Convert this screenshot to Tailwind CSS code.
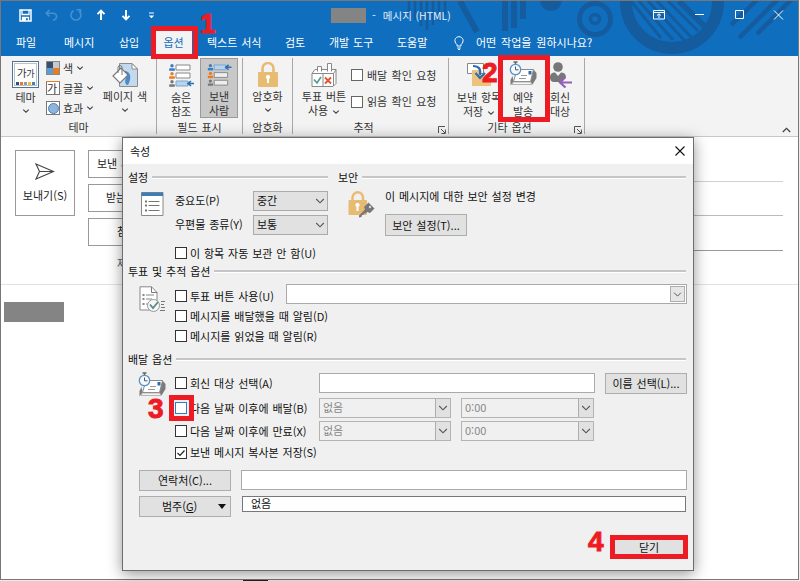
<!DOCTYPE html>
<html lang="ko">
  <head>
    <meta charset="UTF-8" />
    <meta name="viewport" content="width=device-width, initial-scale=1.0" />
    <title>메시지 (HTML)</title>
    <script src="https://cdn.jsdelivr.net/npm/@tailwindcss/browser@4"></script>
  </head>
  <body class="relative w-[800px] h-[581px] overflow-hidden bg-[#ececec] font-['Noto_Sans_CJK_KR',sans-serif] text-[11px] leading-[13px] [word-spacing:0.8px] text-[#222] whitespace-nowrap">
    <!-- shared icons -->
    <svg class="hidden">
      <symbol id="chevron" viewBox="0 0 8 8">
        <path d="M1.2 2.6 4 5.2 6.8 2.6" fill="none" stroke="#444" stroke-width="1.1" />
      </symbol>
      <symbol id="combo-arrow" viewBox="0 0 10 10">
        <path d="M1.2 3 5 6.8 8.8 3" fill="none" stroke="#555" stroke-width="1.1" />
      </symbol>
      <symbol id="launcher" viewBox="0 0 8 8">
        <path d="M.5 7V.5H7M3 3l4 4M7.4 3.5v4h-4" fill="none" stroke="#555" stroke-width="1" />
      </symbol>
      <symbol id="delay-mail" viewBox="0 0 28 26">
        <path d="M3.500 15 1.500 19V24.500L4.500 20.500Z" fill="#7b7b7b" />
        <path d="M24.500 8.500 27.500 12V17L23.500 23.500 21.500 20.500Z" fill="#7b7b7b" />
        <path d="M8 8.500H24.500L21.500 20.500H4.500Z" fill="#fff" stroke="#8a8a8a" />
        <path d="M4.500 21H21.500L23 23.500H3Z" fill="#f5f5f5" stroke="#999" stroke-width=".7" />
        <path d="M12 14.500h6M10 17.500h7" stroke="#999" />
        <rect x="19.500" y="10" width="3" height="3.500" fill="#2b6cb5" />
        <circle cx="6.500" cy="8.500" r="5.200" fill="#f6fafd" stroke="#5a92c6" stroke-width="1.300" />
        <path d="M6.500 5.500v3.300H9.500" fill="none" stroke="#555" />
        <path d="M4.500 1h4M6.500 1v2" stroke="#666" stroke-width="1.500" />
      </symbol>
      <symbol id="person-row" viewBox="0 0 24 7">
        <circle cx="3" cy="1.800" r="1.700" fill="currentColor" />
        <path d="M.2 6.800V4.300H5.800V6.800Z" fill="currentColor" />
      </symbol>
    </svg>

    <div class="w-[799px] h-[580px] border border-[#777] bg-white flex flex-col">
      <!-- title bar and tabs -->
      <div class="relative h-[55px] shrink-0 bg-[#106ebe] text-white">
        <svg class="absolute inset-0" width="797" height="55" fill="none" stroke="#155c9f">
          <path d="M408 0v14M414 0v19M420 0v25M426 0v29M432 0v24M438 0v20M444 0v14" stroke-width="2.500" />
          <path d="M459 0 476 31M504 0v30M513 0v27M522 0v18" stroke-width="6" />
          <circle cx="550" cy="-1" r="11" fill="#155c9f" stroke="none" />
          <circle cx="594" cy="18" r="15.500" stroke-width="5" />
          <circle cx="594" cy="18" r="4.500" stroke-width="3.500" />
          <circle cx="671" cy="1" r="46" stroke-width="12" />
          <path d="M630 0 660 37M638 0 672 39M647 0 684 40M656 0 690 36M667 0 697 30" stroke-width="3" />
          <path d="M678 0 706 28" stroke-width="6" />
          <path d="M738 37 776 -1M756 33 790 -1M730 24 756 -1" stroke-width="4.500" />
        </svg>
        <div class="relative h-[28px] flex items-center">
          <svg class="ml-[18px]" width="13" height="13" viewBox="0 0 13 13"><path d="M1 1h11v11H1z" fill="none" stroke="#fff" stroke-width="1.500" /><path d="M3 1v4.500h7V1M3.500 12V8.500h6V12" fill="none" stroke="#fff" stroke-width="1.300" /><path d="M4 9h3v3H4z" fill="#fff" /></svg>
          <svg class="ml-[13px]" width="13" height="12" viewBox="0 0 13 12" fill="none" stroke="#4590d0" stroke-width="1.600"><path d="M4.500 1 1.200 4.200 4.500 7.400M1.500 4.200H8C13 4.200 12.500 10.500 8 11" /></svg>
          <svg class="ml-[12px]" width="12" height="12" viewBox="0 0 12 12" fill="none" stroke="#4590d0" stroke-width="1.600"><path d="M3.500 1.700a5 5 0 1 0 5.500.4M6.500.8H11M10.500 1v4.500" /></svg>
          <svg class="ml-[14px]" width="10" height="12" viewBox="0 0 10 12" fill="none" stroke="#fff" stroke-width="1.900"><path d="M5 11V1.500M1.500 5.200 5 1.700 8.500 5.200" /></svg>
          <svg class="ml-[15px]" width="10" height="12" viewBox="0 0 10 12" fill="none" stroke="#fff" stroke-width="1.900"><path d="M5 1v9.500M1.500 6.800 5 10.300 8.500 6.800" /></svg>
          <svg class="ml-[17px]" width="7" height="7" viewBox="0 0 7 7"><path d="M1 1h5" stroke="#fff" /><path d="M.8 3.500h5.400L3.500 6.200z" fill="#fff" /></svg>
          <div class="ml-[176px] w-[35px] h-[15px] bg-[#848484]"></div>
          <div class="ml-[6px] text-[#e4effa]">-</div>
          <div class="ml-[7px] mt-[1px] text-[10.5px] text-[#e4effa]">메시지 (HTML)</div>
          <svg class="ml-auto mr-[14px]" width="131" height="12" viewBox="0 0 131 12" fill="none" stroke="#fff" stroke-width="1"><path d="M.5 1.500h11v8.500H.5zM.5 3.500h11M6 9V5M4 6.500l2-1.700 2 1.700M42 5.500h9M82.500 1.500h8v8h-8zM130 1.500l-9 9M121 1.500l9 9" /></svg>
        </div>
        <div class="relative h-[27px] flex items-center">
          <div class="ml-[15px] w-[48px]">파일</div>
          <div class="w-[55px]">메시지</div>
          <div class="w-[36px]">삽입</div>
          <div class="w-[37px] h-[27px] flex items-center justify-center bg-[#f3f3f3] text-[#106ebe]">옵션</div>
          <div class="ml-[15px] w-[78px]">텍스트 서식</div>
          <div class="w-[44px]">검토</div>
          <div class="w-[68px]">개발 도구</div>
          <div class="w-[57px]">도움말</div>
          <svg width="10" height="14" viewBox="0 0 10 14" fill="none" stroke="#fff"><path d="M3 10V8.500C-.8 5.500 1 .7 5 .7s5.800 4.800 2 7.800V10zM3.200 12h3.600M4 13.500h2" /></svg>
          <div class="ml-[12px] [word-spacing:1.800px]">어떤 작업을 원하시나요?</div>
        </div>
      </div>

      <!-- ribbon -->
      <div class="relative h-[81px] shrink-0 bg-[#f3f3f3] border-b border-[#c8c8c8] flex pt-[2px] text-[#333]">
        <div class="w-[156px] h-[76px] border-r border-[#a8a8a8] flex flex-col">
          <div class="h-[65px] flex">
            <div class="ml-[10px] w-[29px] pt-[3px] flex flex-col items-center">
              <div class="w-[27px] h-[27px] border border-[#55708c] bg-white p-px">
                <div class="w-full h-full border border-[#b5c2d0] flex flex-col items-center justify-between pb-[2px]">
                  <div class="text-[10.5px] leading-[17px] text-[#333] tracking-tighter">가<span class="text-[9px]">가</span></div>
                  <div class="flex gap-px"><i class="size-[3px] bg-[#35506e]"></i><i class="size-[3px] bg-[#e97c1f]"></i><i class="size-[3px] bg-[#999]"></i><i class="size-[3px] bg-[#f3b93a]"></i><i class="size-[3px] bg-[#3a83c9]"></i></div>
                </div>
              </div>
              <div class="mt-[3px]">테마</div>
              <svg class="size-2 mt-[3px]"><use href="#chevron" /></svg>
            </div>
            <div class="ml-[6px] w-[55px] flex flex-col">
              <div class="h-[20px] flex items-center">
                <div class="size-[14px] grid grid-cols-2 border border-[#888]"><i class="bg-[#35506e]"></i><i class="bg-[#c9c9c9]"></i><i class="bg-[#5d9bd5]"></i><i class="bg-[#e97c1f]"></i></div>
                <span class="ml-[3px] mr-[3px]">색</span><svg class="size-2"><use href="#chevron" /></svg>
              </div>
              <div class="h-[20px] flex items-center">
                <div class="size-[14px] border border-[#777] bg-white flex items-center text-[11px] leading-[12px] border-t-[#e97c1f]">가</div>
                <span class="ml-[3px] mr-[3px]">글꼴</span><svg class="size-2"><use href="#chevron" /></svg>
              </div>
              <div class="h-[20px] flex items-center">
                <div class="size-[14px] border border-[#777] bg-white flex items-center justify-center"><i class="size-[11px] rounded-full bg-[#8fb4dd] border border-[#4c7fb8]"></i></div>
                <span class="ml-[3px] mr-[3px]">효과</span><svg class="size-2"><use href="#chevron" /></svg>
              </div>
            </div>
            <div class="w-[48px] pt-[4px] flex flex-col items-center">
              <svg width="28" height="26" viewBox="0 0 28 26"><path d="M8.500 1.500H21L26.500 7V24.500H8.500z" fill="#c2d9ee" stroke="#8c8c8c" /><path d="M21 1.500V7h5.500z" fill="#fff" stroke="#8c8c8c" /><path d="M12 9c8-1 9 7 5 14-3 0-4-5-1-9" fill="#4a8ac6" /><path d="M2 14 10 6l7 7-8 8z" fill="#fff" stroke="#777" stroke-width="1.100" /><path d="M7 11V5.500a2 2 0 0 1 4 0V13" fill="none" stroke="#777" /></svg>
              <div class="mt-[2px]">페이지 색</div>
              <svg class="size-2 mt-[3px]"><use href="#chevron" /></svg>
            </div>
          </div>
          <div class="text-center">테마</div>
        </div>

        <div class="w-[86px] h-[76px] border-r border-[#a8a8a8] flex flex-col">
          <div class="h-[65px] flex pt-px">
            <div class="ml-[5px] w-[38px] pt-[5px] flex flex-col items-center">
              <svg width="25" height="24" viewBox="0 0 25 24">
                <use href="#person-row" x="0" y="0" width="24" height="7" class="text-[#3a7cc0]" />
                <use href="#person-row" x="0" y="8" width="24" height="7" class="text-[#e97c1f]" />
                <use href="#person-row" x="0" y="16" width="24" height="7" class="text-[#777]" />
                <path d="M7 1h14v5H7zM7 9h14v5H7z" fill="#fff" stroke="#888" /><path d="M7 17h12v5H7z" fill="#b7d4ee" stroke="#7da5c9" /><path d="M25 19.500h-5M22 17l-3 2.500 3 2.500" fill="none" stroke="#2b6cb5" stroke-width="1.600" />
              </svg>
              <div class="mt-[2px] leading-[14px] text-center">숨은<br />참조</div>
            </div>
            <div class="-mt-px w-[38px] h-[60px] border border-[#9a9a9a] bg-[#c8c8c8] pt-[5px] flex flex-col items-center">
              <svg width="25" height="24" viewBox="0 0 25 24">
                <use href="#person-row" x="0" y="0" width="24" height="7" class="text-[#3a7cc0]" />
                <use href="#person-row" x="0" y="8" width="24" height="7" class="text-[#e97c1f]" />
                <use href="#person-row" x="0" y="16" width="24" height="7" class="text-[#777]" />
                <path d="M7 9h14v5H7zM7 17h14v5H7z" fill="#eee" stroke="#888" /><path d="M7 1h12v5H7z" fill="#b7d4ee" stroke="#7da5c9" /><path d="M25 3.500h-5M22 1l-3 2.500 3 2.500" fill="none" stroke="#2b6cb5" stroke-width="1.600" />
              </svg>
              <div class="mt-[2px] leading-[14px] text-center">보낸<br />사람</div>
            </div>
          </div>
          <div class="text-center">필드 표시</div>
        </div>

        <div class="w-[50px] h-[76px] border-r border-[#a8a8a8] flex flex-col items-center">
          <div class="h-[65px] pt-[4px] flex flex-col items-center">
            <svg width="20" height="26" viewBox="0 0 20 26"><path d="M4.500 11V6.500a5.500 5.500 0 0 1 11 0V11" fill="none" stroke="#e8bb72" stroke-width="2.600" /><rect x="0" y="10" width="20" height="15" rx="1" fill="#e8bb72" /><path d="M10 13a2 2 0 0 1 1 3.800V21H9v-4.200A2 2 0 0 1 10 13" fill="#fff" /></svg>
            <div class="mt-[2px]">암호화</div>
            <svg class="size-2 mt-[3px]"><use href="#chevron" /></svg>
          </div>
          <div>암호화</div>
        </div>

        <div class="relative w-[156px] h-[76px] border-r border-[#a8a8a8] flex flex-col">
          <div class="h-[65px] flex">
            <div class="ml-[6px] w-[50px] pt-[4px] flex flex-col items-center">
              <svg width="26" height="26" viewBox="0 0 26 26" fill="#fff" stroke="#888"><path d="M1 11.500 4 7.500H25V21.500L22 24.500H1zM1 11.500H22.500V24M22.500 11.500 25 7.500M12 11.500V24" /><path d="M6.500 9.500V4.500h4v5M16.500 9.500V1.500h4v8" /><path d="M3 17.500 6 21 10 15" fill="none" stroke="#4d9a94" stroke-width="1.600" /><path d="M14 15.500 20 21.500M20 15.500 14 21.500" stroke="#e0532d" stroke-width="1.800" /></svg>
              <div class="mt-[1px] leading-[14px] text-center">투표 버튼<br />사용 <svg class="size-2 inline"><use href="#chevron" /></svg></div>
            </div>
            <div class="ml-[2px] pt-[4px] flex flex-col">
              <div class="h-[26px] flex items-center [word-spacing:1.300px]"><i class="size-[12px] border border-[#666] bg-white mr-[4px]"></i>배달 확인 요청</div>
              <div class="h-[27px] flex items-center [word-spacing:1.300px]"><i class="size-[12px] border border-[#666] bg-white mr-[4px]"></i>읽음 확인 요청</div>
            </div>
          </div>
          <div class="pr-[14px] text-center">추적</div>
          <svg class="absolute right-[2px] bottom-0 size-2"><use href="#launcher" /></svg>
        </div>

        <div class="relative w-[136px] h-[76px] border-r border-[#a8a8a8] flex flex-col">
          <div class="h-[65px] flex">
            <div class="ml-[6px] w-[48px] pt-[4px] flex flex-col items-center">
              <svg width="26" height="26" viewBox="0 0 26 26"><path d="M1.500 1.500h16v10h-16z" fill="#fff" stroke="#888" /><path d="M6 8h8v5h11v11H6z" fill="#edc27c" /><path d="M7 4c6 0 8 3 7 9M9.500 11l4.500 5 5-5" fill="none" stroke="#2b6cb5" stroke-width="2.200" /></svg>
              <div class="mt-[2px] leading-[14px] text-center">보낸 항목<br />저장 <svg class="size-2 inline"><use href="#chevron" /></svg></div>
            </div>
            <div class="ml-[1px] w-[38px] pt-[3px] flex flex-col items-center">
              <svg width="28" height="26"><use href="#delay-mail" /></svg>
              <div class="mt-[3px] leading-[14px] text-center">예약<br />발송</div>
            </div>
            <div class="ml-[1px] w-[34px] pt-[4px] flex flex-col items-center">
              <svg width="26" height="26" viewBox="0 0 26 26"><circle cx="11" cy="5" r="4.800" fill="#777" /><path d="M3 15.500C3 11.500 5.500 10.500 8 10.500L11 14 14 10.500C17 10.500 18.500 12 19 14.500L13 20H6Q3 19 3 15.500z" fill="#777" /><path d="M25 20.500H13.500M18.500 15l-5.500 5.500 5.500 5" fill="none" stroke="#9160b8" stroke-width="2.200" /></svg>
              <div class="mt-[2px] leading-[14px] text-center">회신<br />대상</div>
            </div>
          </div>
          <div class="pr-[14px] text-center">기타 옵션</div>
          <svg class="absolute right-[2px] bottom-0 size-2"><use href="#launcher" /></svg>
        </div>
        <svg class="absolute right-[7px] bottom-[3px]" width="9" height="6" viewBox="0 0 9 6"><path d="M.8 5 4.500 1.300 8.200 5" fill="none" stroke="#444" stroke-width="1.300" /></svg>
      </div>

      <!-- message header -->
      <div class="h-[148px] shrink-0 border-b border-[#e2e2e2] flex pt-[13px]">
        <div class="ml-[14px] w-[60px] h-[66px] border border-[#999] flex flex-col items-center">
          <svg class="mt-[12px]" width="20" height="17" viewBox="0 0 20 17"><path d="M1 1 18.500 8.500 1 16 4.500 8.500zM4.500 8.500h14" fill="none" stroke="#444" stroke-width="1.100" /></svg>
          <div class="mt-[9px]">보내기(S)</div>
        </div>
        <div class="ml-[13px] w-[70px] flex flex-col gap-[6px]">
          <div class="h-[28px] border border-[#999] pl-[8px] leading-[25px]">보낸 사람</div>
          <div class="h-[28px] border border-[#999] pl-[17px] leading-[25px]">받는 사람</div>
          <div class="h-[28px] border border-[#999] pl-[28px] leading-[25px]">참조</div>
          <div class="h-[20px] pl-[29px] leading-[22px] text-[#555]">제목</div>
        </div>
        <div class="w-[625px] flex flex-col">
          <div class="h-[32px] border-b border-[#d0d0d0]"></div>
          <div class="h-[34px] border-b border-[#bbb]"></div>
          <div class="h-[35px] border-b border-[#999]"></div>
        </div>
      </div>
      <div class="ml-[3px] mt-[17px] w-[60px] h-[20px] bg-[#848484]"></div>
    </div>
    <div class="ml-[243px] w-[25px] h-px bg-[#222]"></div>

    <!-- properties dialog -->
    <div class="absolute left-[122px] top-[137px] w-[572px] h-[434px] border border-[#6d6d6d] bg-[#f0f0f0] shadow-[0_3px_14px_rgba(0,0,0,0.42)] text-[#111]">
      <div class="h-[26px] bg-white pl-[7px] pr-[8px] flex items-center justify-between">
        <span>속성</span>
        <svg width="10" height="10" viewBox="0 0 10 10"><path d="M.5.5l9 9M9.500.5l-9 9" stroke="#111" stroke-width="1.100" /></svg>
      </div>

      <div class="h-[26px] pl-[5px] pr-[7px] flex items-center">
        <div class="w-[200px] flex items-center gap-[4px]">설정<i class="flex-1 h-[3px] bg-[#c6c6c6] border-b border-white"></i></div>
        <div class="ml-[10px] flex-1 flex items-center gap-[4px]">보안<i class="flex-1 h-[3px] bg-[#c6c6c6] border-b border-white"></i></div>
      </div>
      <div class="h-[71px] flex">
        <svg class="ml-[18px] mt-[2px]" width="23" height="24" viewBox="0 0 23 24"><path d="M.5.5h21.500v23H.5z" fill="#fff" stroke="#888" /><path d="M.5.5h21.500v3.500H.5z" fill="#3e7cb5" /><path d="M7.500 9.500h11M7.500 13.500h11M7.500 18.500h11" stroke="#777" /><path d="M4 9.500h2M4 13.500h2M4 18.500h2" stroke="#777" stroke-width="2" /></svg>
        <div class="ml-[11px] w-[154px]">
          <div class="h-[21px] flex items-center">
            <span class="w-[78px]">중요도(P)</span>
            <div class="w-[75px] h-[20px] border border-[#aaa] bg-[#e1e1e1] flex items-center justify-between pl-[3px] pr-[2px]">중간<svg class="size-[10px]"><use href="#combo-arrow" /></svg></div>
          </div>
          <div class="mt-[3px] h-[21px] flex items-center">
            <span class="w-[78px]">우편물 종류(Y)</span>
            <div class="w-[75px] h-[20px] border border-[#aaa] bg-[#e1e1e1] flex items-center justify-between pl-[3px] pr-[2px]">보통<svg class="size-[10px]"><use href="#combo-arrow" /></svg></div>
          </div>
          <div class="mt-[9px] h-[18px] flex items-center"><i class="size-[12px] border border-[#333] bg-white mr-[3px] shrink-0"></i>이 항목 자동 보관 안 함(U)</div>
        </div>
        <svg class="ml-[19px] mt-[1px]" width="27" height="28" viewBox="0 0 27 28"><path d="M4.500 10V6.500a5 5 0 0 1 10.500 0V10" fill="none" stroke="#e8bb72" stroke-width="2.400" /><rect x=".5" y="9" width="18.500" height="15" rx="1" fill="#e8bb72" /><path d="M9.500 12a2 2 0 0 1 1 3.800V20h-2v-4.200a2 2 0 0 1 1-3.800" fill="#fff" /><path d="M20.500 11.500 26.500 17.500 22 22 19 21 17.500 22.500 16 22.500 15.500 24 14 24 13.500 26 11 26.500V24.500L17 18.500 16 16z" fill="#777" /><circle cx="22" cy="16" r="1.200" fill="#ddd" /></svg>
        <div class="ml-[10px]">
          <div class="h-[14px] leading-[13px]">이 메시지에 대한 보안 설정 변경</div>
          <div class="mt-[10px] w-[82px] h-[22px] border border-[#adadad] bg-[#e1e1e1] flex items-center justify-center">보안 설정(T)...</div>
        </div>
      </div>

      <div class="h-[20px] pl-[5px] pr-[7px] flex items-center gap-[4px]">투표 및 추적 옵션<i class="flex-1 h-[3px] bg-[#c6c6c6] border-b border-white"></i></div>
      <div class="h-[68px] flex">
        <svg class="ml-[16px] mt-[5px]" width="28" height="28" viewBox="0 0 28 28"><path d="M1 .8h11.500L18 6.500V24H1z" fill="#fff" stroke="#888" /><path d="M12.500.8v5.700H18" fill="none" stroke="#777" /><path d="M7 9h8M7 13h6M7 18h3" stroke="#888" /><path d="M3.500 9h2M3.500 13h2M3.500 18h2" stroke="#888" stroke-width="2" /><circle cx="14.500" cy="19.500" r="6" fill="#f7f7f7" stroke="#999" /><path d="M11 18.500l3 3.500 5-6" fill="none" stroke="#5b8c8c" stroke-width="1.800" /><path d="M22 15.500h4M22 18.500h3M22 21.500h4M21 24.500h5" stroke="#777" /></svg>
        <div class="ml-[8px] mt-[5px] w-[111px]">
          <div class="h-[20px] flex items-center"><i class="size-[12px] border border-[#333] bg-white mr-[3px] shrink-0"></i>투표 버튼 사용(U)</div>
          <div class="h-[20px] flex items-center"><i class="size-[12px] border border-[#333] bg-white mr-[3px] shrink-0"></i>메시지를 배달했을 때 알림(D)</div>
          <div class="h-[20px] flex items-center"><i class="size-[12px] border border-[#333] bg-white mr-[3px] shrink-0"></i>메시지를 읽었을 때 알림(R)</div>
        </div>
        <div class="mt-[3px] w-[401px] h-[20px] border border-[#aaa] bg-white flex justify-end p-px">
          <div class="w-[15px] border border-[#adadad] bg-[#e6e6e6] flex items-center justify-center"><svg class="size-[9px]"><use href="#combo-arrow" /></svg></div>
        </div>
      </div>

      <div class="h-[20px] pl-[5px] pr-[7px] flex items-center gap-[4px]">배달 옵션<i class="flex-1 h-[3px] bg-[#c6c6c6] border-b border-white"></i></div>
      <div class="h-[93px] flex pt-px">
        <svg class="ml-[15px] mt-[2px]" width="28" height="26"><use href="#delay-mail" /></svg>
        <div class="ml-[9px]">
          <div class="h-[26px] flex items-center">
            <i class="size-[12px] border border-[#333] bg-white mr-[3px]"></i><span class="w-[129px]">회신 대상 선택(A)</span>
            <div class="w-[276px] h-[20px] border border-[#aaa] bg-white"></div>
            <div class="ml-[10px] w-[82px] h-[21px] border border-[#adadad] bg-[#e1e1e1] flex items-center justify-center">이름 선택(L)...</div>
          </div>
          <div class="h-[24px] flex items-center">
            <i class="size-[12px] border border-[#2a7fc9] bg-white mr-[3px]"></i><span class="w-[129px]">다음 날짜 이후에 배달(B)</span>
            <div class="w-[132px] h-[20px] border border-[#b4b4b4] flex items-stretch justify-between pl-[3px] text-[#888]"><span class="leading-[17px]">없음</span><div class="w-[15px] border-l border-[#adadad] bg-[#e1e1e1] flex items-center justify-center"><svg class="size-[10px]"><use href="#combo-arrow" /></svg></div></div>
            <div class="ml-[10px] w-[133px] h-[20px] border border-[#b4b4b4] flex items-stretch justify-between pl-[3px] text-[#888]"><span class="leading-[17px]">0:00</span><div class="w-[15px] border-l border-[#adadad] bg-[#e1e1e1] flex items-center justify-center"><svg class="size-[10px]"><use href="#combo-arrow" /></svg></div></div>
          </div>
          <div class="h-[22px] flex items-center">
            <i class="size-[12px] border border-[#333] bg-white mr-[3px]"></i><span class="w-[129px]">다음 날짜 이후에 만료(X)</span>
            <div class="w-[132px] h-[20px] border border-[#b4b4b4] flex items-stretch justify-between pl-[3px] text-[#888]"><span class="leading-[17px]">없음</span><div class="w-[15px] border-l border-[#adadad] bg-[#e1e1e1] flex items-center justify-center"><svg class="size-[10px]"><use href="#combo-arrow" /></svg></div></div>
            <div class="ml-[10px] w-[133px] h-[20px] border border-[#b4b4b4] flex items-stretch justify-between pl-[3px] text-[#888]"><span class="leading-[17px]">0:00</span><div class="w-[15px] border-l border-[#adadad] bg-[#e1e1e1] flex items-center justify-center"><svg class="size-[10px]"><use href="#combo-arrow" /></svg></div></div>
          </div>
          <div class="h-[21px] flex items-center">
            <i class="size-[12px] border border-[#333] bg-white mr-[3px] flex items-center justify-center"><svg width="8" height="8" viewBox="0 0 8 8"><path d="M.5 4 3 6.500 7.500 1.500" fill="none" stroke="#222" stroke-width="1.200" /></svg></i>보낸 메시지 복사본 저장(S)
          </div>
        </div>
      </div>

      <div class="mt-[8px] ml-[16px] flex">
        <div class="w-[92px] h-[21px] border border-[#adadad] bg-[#e1e1e1] flex items-center justify-center">연락처(C)...</div>
        <div class="ml-[10px] w-[446px] h-[20px] border border-[#aaa] bg-white"></div>
      </div>
      <div class="mt-[5px] ml-[16px] flex">
        <div class="w-[92px] h-[21px] border border-[#adadad] bg-[#e1e1e1] flex items-center justify-between pl-[22px] pr-[4px]"><span>범주(<u>G</u>)</span><svg width="8" height="5" viewBox="0 0 8 5"><path d="M0 0h8L4 5z" fill="#111" /></svg></div>
        <div class="ml-[11px] w-[444px] h-[16px] border border-[#777] bg-white pl-[8px] leading-[13px]">없음</div>
      </div>
      <div class="mt-[18px] ml-[487px] w-[78px] h-[24px] border-[5px] border-[#ed1c24] bg-[#e1e1e1] flex items-center justify-center">닫기</div>
    </div>

    <!-- step markers -->
    <div class="absolute left-[151px] top-[26px] w-[47px] h-[33px] border-[5px] border-[#ed1c24]"></div>
    <div class="absolute left-[498px] top-[55px] w-[52px] h-[67px] border-[5px] border-[#ed1c24]"></div>
    <div class="absolute left-[169px] top-[395px] w-[25px] h-[26px] border-[5px] border-[#ed1c24]"></div>
    <div class="absolute left-[200px] top-[10px] font-['Liberation_Sans',sans-serif] font-bold text-[28px] leading-[28px] text-[#ed1c24] [-webkit-text-stroke:1px_#ed1c24]">1</div>
    <div class="absolute left-[482px] top-[59px] font-['Liberation_Sans',sans-serif] font-bold text-[28px] leading-[28px] text-[#ed1c24] [-webkit-text-stroke:1px_#ed1c24]">2</div>
    <div class="absolute left-[148px] top-[395px] font-['Liberation_Sans',sans-serif] font-bold text-[28px] leading-[28px] text-[#ed1c24] [-webkit-text-stroke:1px_#ed1c24]">3</div>
    <div class="absolute left-[588px] top-[528px] font-['Liberation_Sans',sans-serif] font-bold text-[28px] leading-[28px] text-[#ed1c24] [-webkit-text-stroke:1px_#ed1c24]">4</div>
  </body>
</html>
